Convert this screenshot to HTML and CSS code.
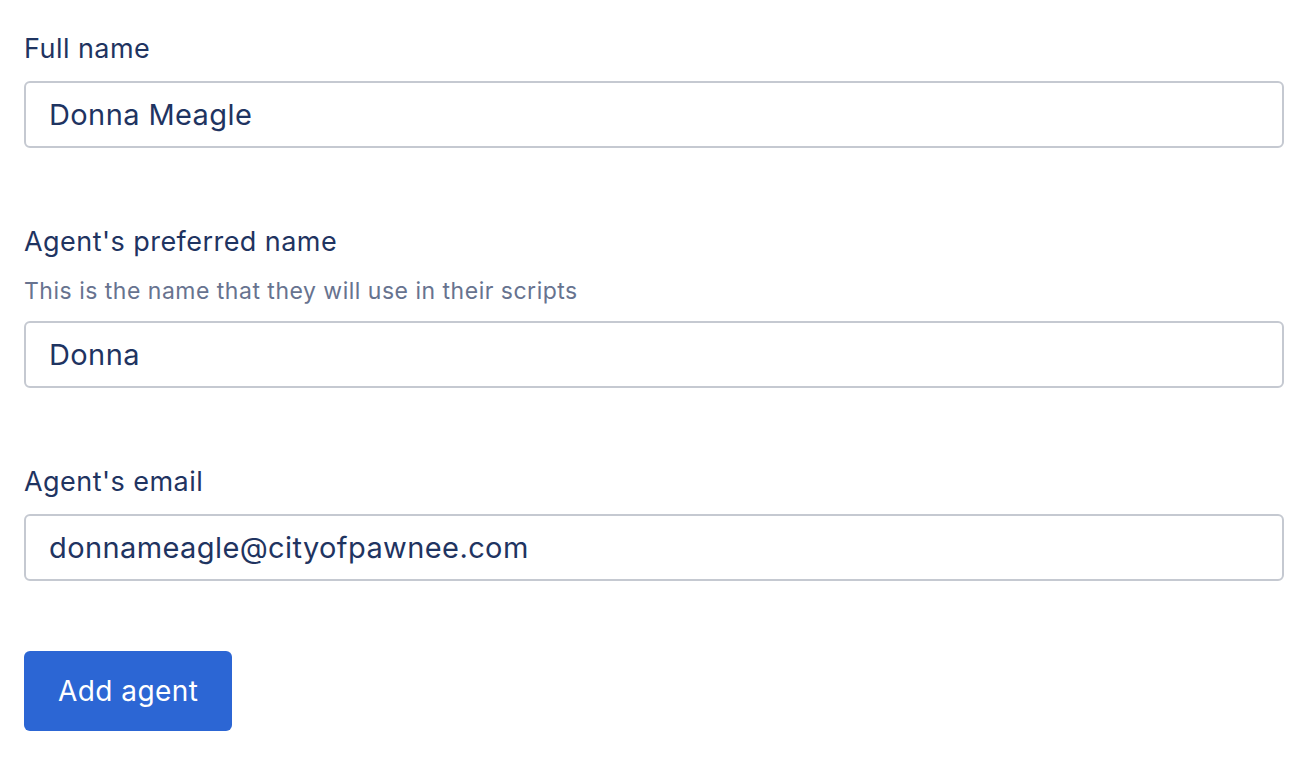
FILE: index.html
```html
<!DOCTYPE html>
<html lang="en">
<head>
    <meta charset="UTF-8">
    <title>Add agent</title>
    <link rel="stylesheet" href="styles.css">
</head>
<body>
    <form class="agent-form">
        <!-- Full name -->
        <div class="field">
            <label for="fullName">Full name</label>
            <input type="text" id="fullName" value="Donna Meagle">
        </div>

        <!-- Preferred name -->
        <div class="field">
            <label for="preferredName">Agent's preferred name</label>
            <p class="hint">This is the name that they will use in their scripts</p>
            <input type="text" id="preferredName" value="Donna">
        </div>

        <!-- Email -->
        <div class="field">
            <label for="email">Agent's email</label>
            <input type="email" id="email" value="donnameagle@cityofpawnee.com">
        </div>

        <button type="submit" class="btn-primary">Add agent</button>
    </form>
</body>
</html>
```

FILE: styles.css
```css
body {
    font-family: Inter, "Noto Sans", sans-serif;
    margin: 0;
    padding: 0;
    background-color: #fff;
    color: #1f3461;
}

.agent-form {
    display: flex;
    flex-direction: column;
    align-items: flex-start;
    padding: 33px 32px 0 24px;
}

.field {
    display: flex;
    flex-direction: column;
    width: 100%;
    margin-bottom: 78px;
}

.field label {
    font-size: 27px;
    line-height: 32px;
    letter-spacing: 0.45px;
    margin-bottom: 16px;
}

.field .hint {
    font-size: 23px;
    line-height: 28px;
    letter-spacing: 0.5px;
    color: #67738f;
    margin: 3px 0 16px;
}

.field input {
    box-sizing: border-box;
    width: 100%;
    height: 67px;
    padding: 0 23px;
    border: 2px solid #c5c9d1;
    border-radius: 6px;
    font-family: inherit;
    font-size: 29px;
    letter-spacing: 0.4px;
    color: #1f3461;
    outline: none;
}

.btn-primary {
    height: 80px;
    padding: 0 34px;
    margin-top: -8px;
    background-color: #2c66d4;
    color: white;
    border: none;
    border-radius: 6px;
    font-family: inherit;
    font-size: 28px;
    letter-spacing: 0.45px;
    cursor: pointer;
}
```
